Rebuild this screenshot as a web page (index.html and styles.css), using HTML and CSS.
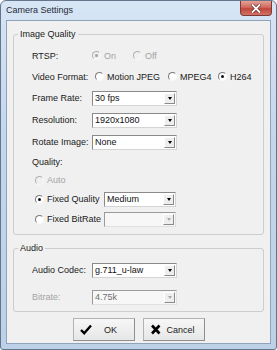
FILE: index.html
```html
<!DOCTYPE html>
<html lang="en">
<head>
    <meta charset="UTF-8">
    <title>Camera Settings</title>
    <link rel="stylesheet" href="styles.css">
</head>
<body>
    <div class="window">
        <div class="titlebar">
            <span class="title">Camera Settings</span>
            <span class="close-btn">
                <svg width="10" height="9" viewBox="0 0 10 9">
                    <path d="M1.5 1 L8.5 8 M8.5 1 L1.5 8" stroke="#6b2520" stroke-width="3.2" stroke-linecap="square"/>
                    <path d="M1.5 1 L8.5 8 M8.5 1 L1.5 8" stroke="#ffffff" stroke-width="1.8" stroke-linecap="square"/>
                </svg>
            </span>
        </div>

        <div class="client">
            <fieldset class="group group-image">
                <legend>Image Quality</legend>

                <div class="row row-radio">
                    <span class="label">RTSP:</span>
                    <span class="option disabled opt-on"><span class="radio checked"></span>On</span>
                    <span class="option disabled"><span class="radio"></span>Off</span>
                </div>

                <div class="row row-radio">
                    <span class="label label-wide">Video Format:</span>
                    <span class="option opt-mjpeg"><span class="radio"></span>Motion JPEG</span>
                    <span class="option opt-mpeg4"><span class="radio"></span>MPEG4</span>
                    <span class="option"><span class="radio checked"></span>H264</span>
                </div>

                <div class="row">
                    <span class="label">Frame Rate:</span>
                    <div class="combo"><span class="combo-text">30 fps</span><span class="combo-btn"></span></div>
                </div>

                <div class="row">
                    <span class="label">Resolution:</span>
                    <div class="combo"><span class="combo-text">1920x1080</span><span class="combo-btn"></span></div>
                </div>

                <div class="row">
                    <span class="label">Rotate Image:</span>
                    <div class="combo"><span class="combo-text">None</span><span class="combo-btn"></span></div>
                </div>

                <div class="row row-quality">
                    <span class="label">Quality:</span>
                </div>

                <div class="row row-quality sub">
                    <span class="option disabled"><span class="radio"></span>Auto</span>
                </div>

                <div class="row row-sub sub">
                    <span class="option opt-fixed"><span class="radio checked"></span>Fixed Quality</span>
                    <div class="combo combo-small"><span class="combo-text">Medium</span><span class="combo-btn"></span></div>
                </div>

                <div class="row row-sub sub">
                    <span class="option opt-fixed"><span class="radio"></span>Fixed BitRate</span>
                    <div class="combo combo-small combo-disabled"><span class="combo-text"></span><span class="combo-btn"></span></div>
                </div>
            </fieldset>

            <fieldset class="group group-audio">
                <legend>Audio</legend>

                <div class="row">
                    <span class="label">Audio Codec:</span>
                    <div class="combo"><span class="combo-text">g.711_u-law</span><span class="combo-btn"></span></div>
                </div>

                <div class="row row-bitrate">
                    <span class="label disabled">Bitrate:</span>
                    <div class="combo combo-disabled"><span class="combo-text">4.75k</span><span class="combo-btn"></span></div>
                </div>
            </fieldset>

            <div class="buttons">
                <button class="btn">
                    <svg class="btn-icon" width="12" height="11" viewBox="0 0 12 11">
                        <path d="M1 6 L4.2 9.2 L11 1.5" fill="none" stroke="#000" stroke-width="2.4"/>
                    </svg>
                    <span class="btn-text">OK</span>
                </button>
                <button class="btn">
                    <svg class="btn-icon" width="12" height="11" viewBox="0 0 12 11">
                        <path d="M2 1.5 L9.5 9.5 M9.5 1.5 L2 9.5" fill="none" stroke="#000" stroke-width="2.6"/>
                    </svg>
                    <span class="btn-text">Cancel</span>
                </button>
            </div>
        </div>
    </div>
</body>
</html>
```

FILE: styles.css
```css
body {
    margin: 0;
    font-family: "Liberation Sans", Arial, sans-serif;
    font-size: 9px;
    color: #1a1a1a;
    background: #ffffff;
}
.window {
    width: 277px;
    height: 350px;
    box-sizing: border-box;
    border: 1px solid #65768c;
    border-radius: 6px 6px 3px 3px;
    padding: 0 5px 5px 5px;
    background: linear-gradient(#d7e5f5, #c3d6ec 40%, #bcd0e7);
    display: flex;
    flex-direction: column;
}
.titlebar {
    height: 19px;
    margin: 0 -5px;
    padding-left: 5px;
    display: flex;
    justify-content: space-between;
    align-items: flex-start;
}
.title {
    line-height: 19px;
    font-size: 9px;
    color: #1e2a38;
}
.close-btn {
    width: 32px;
    height: 15px;
    margin-right: 4px;
    box-sizing: border-box;
    border: 1px solid #7d3a35;
    border-top: none;
    border-radius: 0 0 4px 4px;
    background: linear-gradient(#e6a195, #d16a5d 45%, #c0463a 55%, #d27366);
    display: flex;
    justify-content: center;
    align-items: center;
}
.client {
    flex: 1;
    background: #f0f0f0;
    border: 1px solid #8fa3bb;
    padding-top: 7px;
}
.group {
    margin: 0 6px;
    padding: 5px 0 5px 4px;
    border: 1px solid #cdcdcd;
    border-radius: 3px;
    min-width: 0;
}
.group legend {
    padding: 0 2px;
    line-height: 12px;
    color: #1a1a1a;
}
.group-audio {
    margin-top: 7px;
}
.row {
    display: flex;
    align-items: center;
    height: 22px;
    padding-left: 14px;
}
.row-radio {
    height: 21px;
}
.row-quality {
    height: 18px;
}
.row-sub {
    height: 20px;
}
.row-bitrate {
    height: 18px;
    margin-top: 7px;
}
.sub {
    padding-left: 17px;
}
.label {
    width: 60px;
    flex-shrink: 0;
}
.label-wide {
    width: 63px;
}
.disabled {
    color: #a3a3a3;
}
.option {
    display: flex;
    align-items: center;
    white-space: nowrap;
}
.opt-on {
    width: 41px;
}
.opt-mjpeg {
    width: 73px;
}
.opt-mpeg4 {
    width: 50px;
}
.opt-fixed {
    width: 69px;
}
.radio {
    width: 9px;
    height: 9px;
    box-sizing: border-box;
    border-radius: 50%;
    border: 1px solid;
    border-color: #7a7a7a #f8f8f8 #f8f8f8 #7a7a7a;
    background: #ffffff;
    margin-right: 3px;
    display: flex;
    justify-content: center;
    align-items: center;
}
.radio.checked::after {
    content: "";
    width: 3px;
    height: 3px;
    border-radius: 50%;
    background: #111111;
}
.disabled .radio {
    border-color: #b0b0b0 #f8f8f8 #f8f8f8 #b0b0b0;
    background: #f0f0f0;
}
.disabled .radio.checked::after {
    background: #a0a0a0;
}
.combo {
    width: 85px;
    height: 15px;
    box-sizing: border-box;
    border: 1px solid #8a8a8a;
    border-right-color: #d4d4d4;
    border-bottom-color: #d4d4d4;
    background: #ffffff;
    display: flex;
    align-items: center;
}
.combo-small {
    width: 72px;
}
.combo-text {
    flex: 1;
    padding-left: 2px;
    color: #111111;
}
.combo-btn {
    width: 11px;
    height: 11px;
    margin-right: 1px;
    box-sizing: border-box;
    border: 1px solid;
    border-color: #ffffff #8a8a8a #8a8a8a #ffffff;
    background: #eeeeee;
    display: flex;
    justify-content: center;
    align-items: center;
}
.combo-btn::after {
    content: "";
    border-left: 2.5px solid transparent;
    border-right: 2.5px solid transparent;
    border-top: 3px solid #000000;
}
.combo-disabled {
    background: #f7f7f7;
    border-color: #9a9a9a #e0e0e0 #e0e0e0 #9a9a9a;
}
.combo-disabled .combo-text {
    color: #6f6f6f;
}
.combo-disabled .combo-btn::after {
    border-top-color: #a8a8a8;
}
.buttons {
    display: flex;
    justify-content: center;
    gap: 8px;
    margin-top: 6px;
}
.btn {
    width: 62px;
    height: 23px;
    padding: 0 4px 0 6px;
    border: 1px solid #b3b3b3;
    border-right-color: #8f8f8f;
    border-bottom-color: #8f8f8f;
    background: linear-gradient(#f7f7f7, #e6e6e6);
    display: flex;
    align-items: center;
    font-family: "Liberation Sans", Arial, sans-serif;
    font-size: 9px;
    color: #1a1a1a;
}
.btn-icon {
    flex-shrink: 0;
}
.btn-text {
    flex: 1;
    text-align: center;
}
```
